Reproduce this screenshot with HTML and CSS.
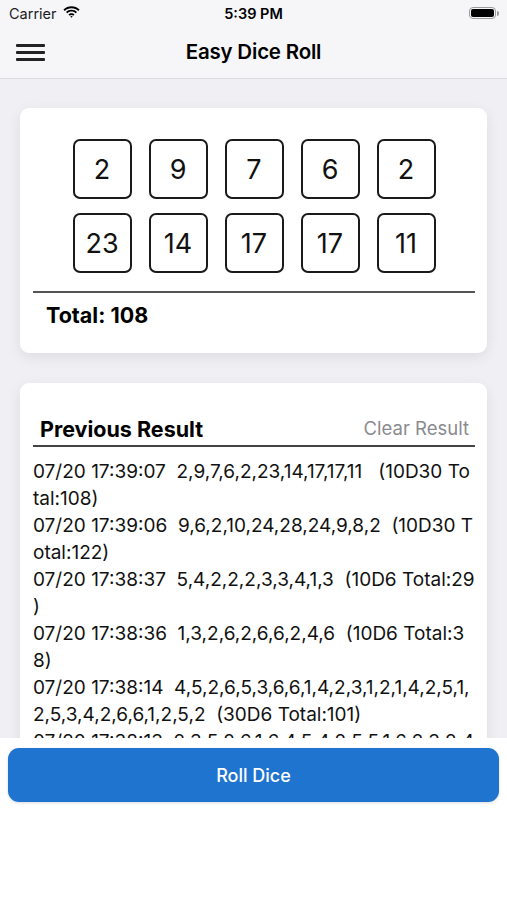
FILE: index.html
```html
<!DOCTYPE html>
<html>
<head>
<meta charset="utf-8">
<link rel="stylesheet" href="styles.css">
</head>
<body>
<div class="screen">
  <div class="status">
    <div class="carrier">Carrier
      <svg class="wifi" width="17" height="12" viewBox="0 0 17 12"><path d="M8.5 2.2c2.6 0 5 1 6.8 2.7l1.3-1.3C14.4 1.5 11.6.3 8.5.3S2.6 1.5.4 3.6l1.3 1.3C3.5 3.2 5.9 2.2 8.5 2.2z" fill="#000"/><path d="M8.5 5.6c1.6 0 3.1.6 4.2 1.7l1.3-1.3C12.6 4.6 10.6 3.7 8.5 3.7S4.4 4.6 3 6l1.3 1.3c1.1-1.1 2.6-1.7 4.2-1.7z" fill="#000"/><path d="M8.5 9.1c.7 0 1.3.3 1.7.7l1.3-1.3C10.7 7.7 9.7 7.2 8.5 7.2S6.3 7.7 5.5 8.5l1.3 1.3c.4-.4 1-.7 1.7-.7z" fill="#000"/><path d="M8.5 11.8l1.2-1.2c-.3-.3-.7-.5-1.2-.5s-.9.2-1.2.5z" fill="#000"/></svg>
    </div>
    <div class="time">5:39 PM</div>
    <div class="battery"><span class="batt-body"><span class="batt-fill"></span></span><span class="batt-tip"></span></div>
  </div>
  <div class="navbar">
    <div class="hamburger"><span></span><span></span><span></span></div>
    <div class="title">Easy Dice Roll</div>
  </div>
  <div class="content">
    <div class="card dice-card">
      <div class="dice-grid">
        <div class="die">2</div><div class="die">9</div><div class="die">7</div><div class="die">6</div><div class="die">2</div>
        <div class="die">23</div><div class="die">14</div><div class="die">17</div><div class="die">17</div><div class="die">11</div>
      </div>
      <div class="divider"></div>
      <div class="total">Total: 108</div>
    </div>
    <div class="card history-card">
      <div class="history-head">
        <div class="history-title">Previous Result</div>
        <div class="clear">Clear Result</div>
      </div>
      <div class="history">
        <div class="entry">07/20 17:39:07  2,9,7,6,2,23,14,17,17,11   (10D30 To<br>tal:108)</div>
        <div class="entry">07/20 17:39:06  9,6,2,10,24,28,24,9,8,2  (10D30 T<br>otal:122)</div>
        <div class="entry">07/20 17:38:37  5,4,2,2,2,3,3,4,1,3  (10D6 Total:29<br>)</div>
        <div class="entry">07/20 17:38:36  1,3,2,6,2,6,6,2,4,6  (10D6 Total:3<br>8)</div>
        <div class="entry">07/20 17:38:14  4,5,2,6,5,3,6,6,1,4,2,3,1,2,1,4,2,5,1,<br>2,5,3,4,2,6,6,1,2,5,2  (30D6 Total:101)</div>
        <div class="entry">07/20 17:38:13  2,3,5,2,6,1,6,4,5,4,2,5,5,1,6,2,3,2,4,<br>1,2,3  (22D6 Total:74)</div>
      </div>
    </div>
  </div>
  <div class="bottom">
    <button class="roll">Roll Dice</button>
  </div>
</div>
</body>
</html>
```
FILE: styles.css
```css
* { box-sizing: border-box; }
html, body { margin: 0; padding: 0; }
body {
  font-family: Inter, "Noto Sans", "Liberation Sans", sans-serif;
  color: #000;
  background: #fff;
}
.screen {
  width: 507px;
  height: 900px;
  display: flex;
  flex-direction: column;
  overflow: hidden;
}
.status {
  height: 28px;
  background: #f6f6f9;
  display: flex;
  align-items: center;
  justify-content: space-between;
  padding: 0 8px 2px 9px;
  position: relative;
}
.carrier {
  font-size: 14.5px;
  color: #1c1c1e;
  display: flex;
  align-items: center;
  gap: 6px;
}
.wifi { margin-top: -2px; }
.time {
  position: absolute;
  left: 0; right: 0;
  text-align: center;
  font-size: 14.5px;
  font-weight: 600;
  top: 5px;
}
.battery {
  display: flex;
  align-items: center;
}
.batt-body {
  width: 27px;
  height: 12px;
  border: 1.5px solid #9a9a9e;
  border-radius: 4px;
  padding: 1px;
  display: flex;
}
.batt-fill {
  flex: 1;
  background: #000;
  border-radius: 2px;
}
.batt-tip {
  width: 2px;
  height: 5px;
  background: #9a9a9e;
  border-radius: 0 2px 2px 0;
  margin-left: 1px;
}
.navbar {
  height: 51px;
  background: #f6f6f9;
  border-bottom: 1px solid #dcdce0;
  display: flex;
  align-items: center;
  position: relative;
  padding-left: 16px;
}
.hamburger {
  display: flex;
  flex-direction: column;
  gap: 4.5px;
  margin-top: -1px;
}
.hamburger span {
  display: block;
  width: 29px;
  height: 2.5px;
  background: #222;
  border-radius: 1px;
}
.title {
  position: absolute;
  left: 0; right: 0;
  text-align: center;
  font-size: 20.5px;
  font-weight: 600;
  top: 11px;
  letter-spacing: -0.2px;
}
.content {
  flex: 1;
  background: #f0f0f4;
  padding: 29px 20px 0;
  overflow: hidden;
  display: flex;
  flex-direction: column;
  gap: 30px;
}
.card {
  background: #fff;
  border-radius: 9px;
  box-shadow: 0 4px 14px rgba(0,0,0,0.08);
  flex-shrink: 0;
}
.dice-card {
  height: 245px;
  padding: 31px 12px 0 13px;
}
.dice-grid {
  display: grid;
  grid-template-columns: repeat(5, 59px);
  column-gap: 17px;
  row-gap: 14px;
  justify-content: center;
}
.die {
  height: 60px;
  border: 2.5px solid #1a1a1a;
  border-radius: 7px;
  display: flex;
  align-items: center;
  justify-content: center;
  font-size: 27px;
  color: #111;
}
.divider {
  height: 2px;
  background: #555;
  margin-top: 18px;
}
.total {
  font-size: 21.5px;
  font-weight: 700;
  padding-left: 13px;
  margin-top: 9px;
}
.history-card {
  padding: 33px 12px 20px 13px;
}
.history-head {
  display: flex;
  justify-content: space-between;
  align-items: flex-end;
  border-bottom: 2px solid #444;
  padding: 0 6px 3px 7px;
}
.history-title {
  font-size: 21.5px;
  font-weight: 700;
}
.clear {
  font-size: 18.5px;
  color: #8a8a8e;
  padding-bottom: 3px;
}
.history {
  margin-top: 11px;
  font-size: 19px;
  line-height: 27px;
  color: #111;
}
.entry {
  white-space: pre;
}
.bottom {
  height: 162px;
  background: #fff;
  padding: 10px 8px 0;
  flex-shrink: 0;
}
.roll {
  width: 100%;
  height: 54px;
  border: none;
  border-radius: 11px;
  background: #1e74cf;
  color: #fff;
  font-family: inherit;
  font-size: 18px;
  font-weight: 500;
  box-shadow: 0 1px 3px rgba(0,0,0,0.15);
}
```
